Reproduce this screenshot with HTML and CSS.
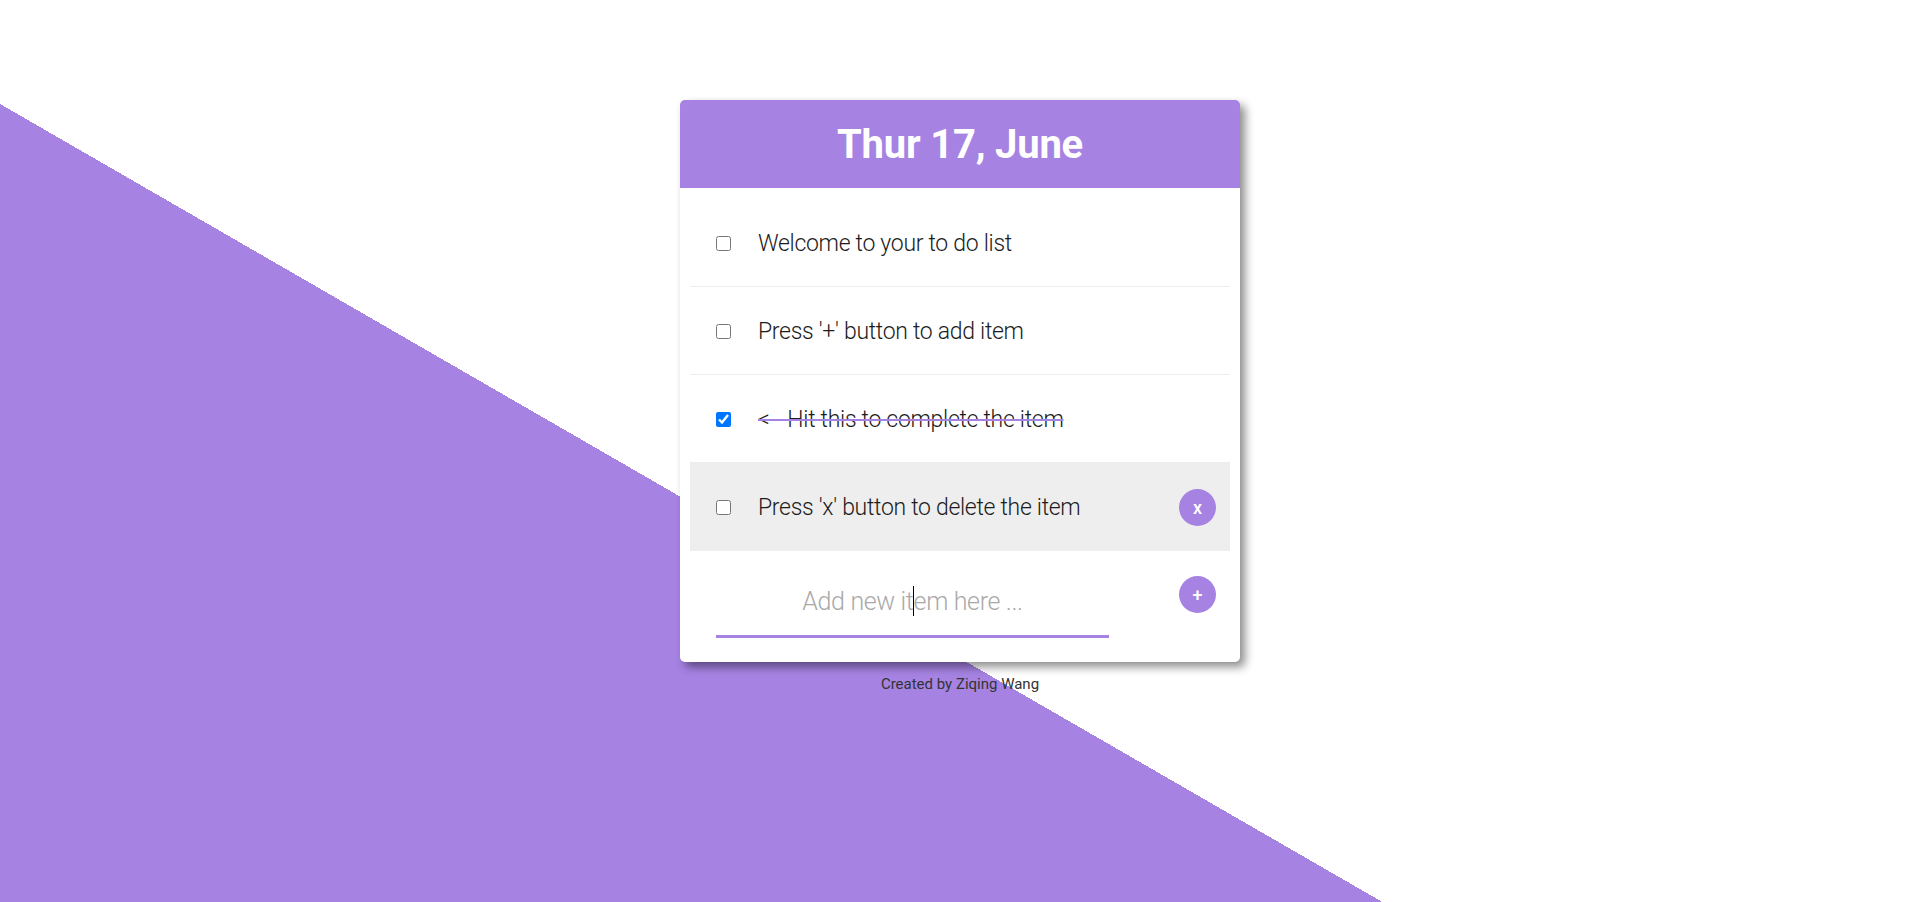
FILE: index.html
```html
<!DOCTYPE html>
<html lang="en">
<head>
<meta charset="utf-8">
<title>To Do List</title>
<link rel="stylesheet" href="styles.css">
</head>
<body>
<div class="page">
  <div class="card">
    <div class="header"><h1 class="title">Thur 17, June</h1></div>
    <ul class="list">
      <li class="item"><input class="check" type="checkbox"><span class="label">Welcome to your to do list</span></li>
      <li class="item"><input class="check" type="checkbox"><span class="label">Press '+' button to add item</span></li>
      <li class="item"><input class="check" type="checkbox" checked><span class="label done">&lt;-- Hit this to complete the item</span></li>
      <li class="item hover"><input class="check" type="checkbox"><span class="label">Press 'x' button to delete the item</span><button class="round-btn del">x</button></li>
    </ul>
    <div class="add">
      <div class="input-wrap"><input class="new-item" type="text" placeholder="Add new item here ..."></div>
      <button class="round-btn plus">+</button>
    </div>
  </div>
  <p class="footer">Created by Ziqing Wang</p>
</div>
</body>
</html>
```
FILE: styles.css
```css
* { box-sizing: border-box; }
html, body { margin: 0; padding: 0; }
body { font-family: Roboto, "Liberation Sans", sans-serif; }

.page {
  min-height: 100vh;
  display: flex;
  flex-direction: column;
  align-items: center;
  padding-top: 100px;
  background: linear-gradient(210deg, #ffffff 1050px, #a683e3 1050px);
}

.card {
  width: 560px;
  background: #fff;
  border-radius: 5px;
  box-shadow: 5px 5px 10px rgba(0, 0, 0, 0.45);
  overflow: hidden;
}

.header {
  height: 88px;
  padding-top: 1px;
  background: #a683e3;
  display: flex;
  align-items: center;
  justify-content: center;
}
.title {
  margin: 0;
  color: #fff;
  font-size: 40px;
  font-weight: 700;
  letter-spacing: -0.2px;
  line-height: 1;
}

.list {
  list-style: none;
  margin: 0;
  padding: 11px 10px 0;
}
.item {
  height: 88px;
  display: flex;
  align-items: center;
  padding-left: 26px;
  padding-right: 14px;
  padding-top: 1px;
  border-bottom: 1px solid #eeeeee;
}
.item.hover { background: #eeeeee; border-bottom-color: transparent; }

.check {
  width: 15px;
  height: 15px;
  margin: 0 27px 0 0;
  flex: none;
}
.label {
  flex: 1;
  font-size: 23px;
  letter-spacing: -0.3px;
  font-weight: 300;
  color: #1c1c1c;
}
.label.done {
  text-decoration: line-through;
  text-decoration-color: #a683e3;
  text-decoration-thickness: 2px;
}

.round-btn {
  width: 37px;
  height: 37px;
  border: none;
  border-radius: 50%;
  background: #a683e3;
  color: #fff;
  font-family: Roboto, sans-serif;
  font-size: 18px;
  font-weight: 500;
  padding: 0;
  flex: none;
}

.add {
  display: flex;
  align-items: flex-start;
  justify-content: space-between;
  padding: 25px 24px 24px 36px;
}
.input-wrap {
  position: relative;
}
.input-wrap::after {
  content: "";
  position: absolute;
  left: 197px;
  top: 10px;
  width: 1px;
  height: 30px;
  background: #000;
}
.new-item {
  display: block;
  width: 393px;
  height: 62px;
  padding: 10px 0 19px;
  border: none;
  border-bottom: 3px solid #a683e3;
  outline: none;
  font-family: Roboto, sans-serif;
  font-size: 25px;
  letter-spacing: -0.35px;
  font-weight: 300;
  text-align: center;
  color: #222;
  background: transparent;
}
.new-item::placeholder { color: #a9a9a9; }

.footer {
  margin: 13px 0 0;
  font-size: 15px;
  color: #333;
  line-height: normal;
}
```
